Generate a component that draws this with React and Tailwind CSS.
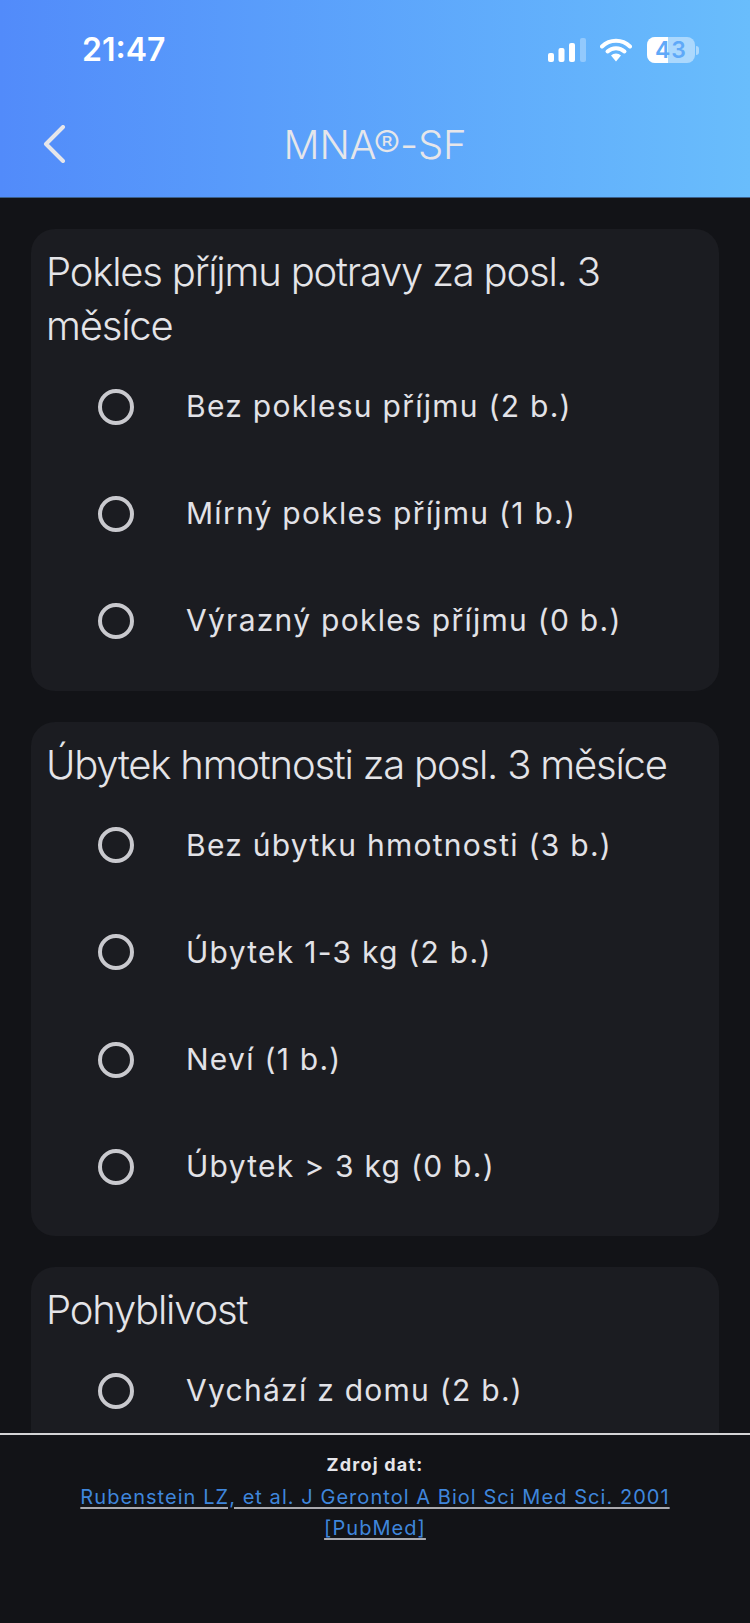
const sections = [
  {
    title: 'Pokles příjmu potravy za posl. 3 měsíce',
    options: ['Bez poklesu příjmu (2 b.)', 'Mírný pokles příjmu (1 b.)', 'Výrazný pokles příjmu (0 b.)'],
  },
  {
    title: 'Úbytek hmotnosti za posl. 3 měsíce',
    options: ['Bez úbytku hmotnosti (3 b.)', 'Úbytek 1-3 kg (2 b.)', 'Neví (1 b.)', 'Úbytek > 3 kg (0 b.)'],
  },
  {
    title: 'Pohyblivost',
    options: ['Vychází z domu (2 b.)'],
  },
];

function StatusIcons() {
  return (
    <div className="flex items-center">
      <svg width="38" height="24" viewBox="0 0 38 24" fill="#fff">
        <rect x="0" y="15" width="6" height="9" rx="2" />
        <rect x="10.5" y="10" width="6" height="14" rx="2" />
        <rect x="21" y="5" width="6" height="19" rx="2" />
        <rect x="32" y="0" width="6" height="24" rx="2" opacity="0.3" />
      </svg>
      <svg className="ml-[14px]" width="32" height="24" viewBox="0 0 32 24" fill="none">
        <path d="M2 8.5a20 20 0 0 1 28 0" stroke="#fff" strokeWidth="4" strokeLinecap="round" />
        <path d="M7.5 13.5a12.5 12.5 0 0 1 17 0" stroke="#fff" strokeWidth="4" strokeLinecap="round" />
        <path d="M11 17.5a7 7 0 0 1 10 0L16 23.5Z" fill="#fff" />
      </svg>
      <div className="relative ml-[15px] flex h-[26px] w-[48px] items-center justify-center overflow-hidden rounded-[8px] bg-white/45 text-[23px] font-semibold text-[#5fa9f8]">
        <div className="absolute inset-y-0 left-0 w-[21px] bg-white" />
        <span className="relative tracking-[1px]">43</span>
      </div>
      <div className="ml-[1px] h-[9px] w-[3px] rounded-r-full bg-white/45" />
    </div>
  );
}

function Option({ label }) {
  return (
    <div className="flex h-[107.2px] items-center pl-[52px]">
      <div className="h-[36px] w-[36px] shrink-0 rounded-full border-[4px] border-[#c9c9ce]" />
      <span className="ml-[52px] text-[30px] tracking-[1.27px] text-[#e2e2e7]">{label}</span>
    </div>
  );
}

export default function App() {
  return (
    <div className="flex h-[1623px] w-[750px] flex-col overflow-hidden bg-[#121317] font-['Inter',sans-serif]">
      <header className="h-[198px] shrink-0 border-b border-[#3a5f8a] bg-gradient-to-r from-[#528bfa] to-[#69bdfc]">
        <div className="flex h-[100px] items-center justify-between pl-[82px] pr-[51px]">
          <span className="text-[32px] font-semibold text-white">21:47</span>
          <StatusIcons />
        </div>
        <div className="relative flex h-[86px] items-center justify-center pt-[4px]">
          <svg className="absolute left-[42px] top-[25px]" width="24" height="38" viewBox="0 0 24 38" fill="none">
            <path d="M21 2 4 19l17 17" stroke="#e6e6ea" strokeWidth="4" strokeLinecap="round" strokeLinejoin="round" />
          </svg>
          <span className="text-[40px] font-light tracking-[-0.2px] text-[#e6e6ea]">MNA®-SF</span>
        </div>
      </header>

      <main className="flex min-h-0 flex-1 flex-col gap-[31px] overflow-hidden px-[31px] pt-[31px]">
        {sections.map((section) => (
          <section key={section.title} className="shrink-0 rounded-[24px] bg-[#1b1c21] py-[16px] pl-[15px] pr-[16px]">
            <h2 className="text-[40px] font-light leading-[54px] tracking-[-1.2px] text-[#e4e4e8]">{section.title}</h2>
            {section.options.map((option) => (
              <Option key={option} label={option} />
            ))}
          </section>
        ))}
      </main>

      <footer className="h-[190px] shrink-0 border-t-2 border-[#d4d4d6] pt-[15px] text-center">
        <p className="text-[18px] font-bold leading-[30px] tracking-[1.2px] text-[#e6e6ea]">Zdroj dat:</p>
        <p className="mx-auto mt-[2px] w-[620px] text-[20px] leading-[31px] tracking-[1.05px] text-[#3f86dc] underline decoration-[#a9a9ae] underline-offset-[3px]">
          Rubenstein LZ, et al. J Gerontol A Biol Sci Med Sci. 2001 [PubMed]
        </p>
      </footer>
    </div>
  );
}
